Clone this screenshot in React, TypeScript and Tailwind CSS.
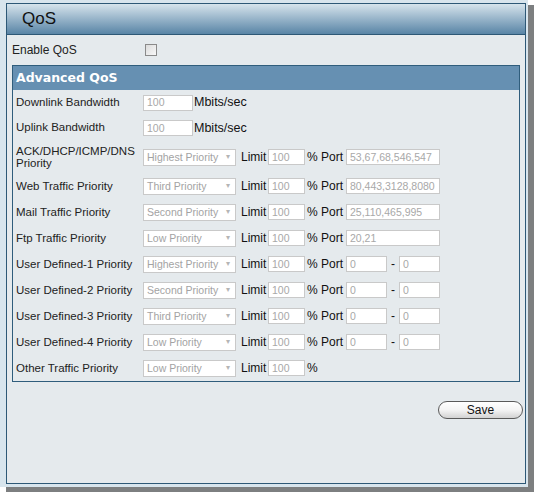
import React from 'react'

type Row = { label: string[]; sel: string; port?: string; range?: boolean; h?: string }

const rows: Row[] = [
  { label: ['ACK/DHCP/ICMP/DNS', 'Priority'], sel: 'Highest Priority', port: '53,67,68,546,547', h: 'h-[32px]' },
  { label: ['Web Traffic Priority'], sel: 'Third Priority', port: '80,443,3128,8080' },
  { label: ['Mail Traffic Priority'], sel: 'Second Priority', port: '25,110,465,995' },
  { label: ['Ftp Traffic Priority'], sel: 'Low Priority', port: '20,21' },
  { label: ['User Defined-1 Priority'], sel: 'Highest Priority', range: true },
  { label: ['User Defined-2 Priority'], sel: 'Second Priority', range: true },
  { label: ['User Defined-3 Priority'], sel: 'Third Priority', range: true },
  { label: ['User Defined-4 Priority'], sel: 'Low Priority', range: true },
  { label: ['Other Traffic Priority'], sel: 'Low Priority' },
]

function Box({ value, w }: { value: string; w: string }) {
  return (
    <div className={`${w} h-[16px] bg-white border border-[#c9c9c9] px-[3px] flex items-center text-[10.5px] text-[#a8a8a8] leading-none overflow-hidden whitespace-nowrap`}>
      {value}
    </div>
  )
}

function Select({ value }: { value: string }) {
  return (
    <div className="w-[93px] h-[17px] bg-white border border-[#c9c9c9] pl-[3px] pr-[5px] flex items-center justify-between text-[10.5px] text-[#a3a3a3] leading-none">
      <span>{value}</span>
      <span className="text-[8px] text-[#b5b5b5]">▾</span>
    </div>
  )
}

function PriorityRow({ row }: { row: Row }) {
  return (
    <div className={`flex items-center ${row.h ?? 'h-[26px]'}`}>
      <div className="w-[127px] text-[11.5px] leading-[12px] text-[#222]">
        {row.label.map((l) => (
          <div key={l}>{l}</div>
        ))}
      </div>
      <Select value={row.sel} />
      <span className="w-[32px] pl-[5px] text-[12px] text-[#111]">Limit</span>
      <Box value="100" w="w-[37px]" />
      {row.port !== undefined || row.range ? (
        <span className="w-[41px] pl-[2px] text-[12px] text-[#111]">% Port</span>
      ) : (
        <span className="pl-[2px] text-[12px] text-[#111]">%</span>
      )}
      {row.port !== undefined && <Box value={row.port} w="w-[94px]" />}
      {row.range && (
        <>
          <Box value="0" w="w-[41px]" />
          <span className="w-[12px] text-center text-[12px] text-[#111]">-</span>
          <Box value="0" w="w-[41px]" />
        </>
      )}
    </div>
  )
}

export default function App() {
  return (
    <div className="w-[534px] h-[492px] bg-white font-['Liberation_Sans',Arial,sans-serif]">
      <div className="w-[528px] h-[487px] bg-[#d8e5ed] pt-[3px] pl-[6px] shadow-[6px_5px_0_#7d7f80]">
        <div className="w-[520px] h-[481px] border border-[#2d5876] bg-[#e5eaed] flex flex-col">
          <div className="h-[31px] bg-gradient-to-b from-[#d6e4ec] to-[#5985a6] border-b border-[#2d5876] flex items-center pl-[15px]">
            <span className="text-[17px] text-[#111]">QoS</span>
          </div>
          <div className="px-[5px] flex flex-col">
            <div className="h-[30px] flex items-center">
              <span className="w-[133px] text-[12px] text-[#222]">Enable QoS</span>
              <div className="w-[12px] h-[12px] border border-[#8a8a8a] bg-gradient-to-br from-[#dcdcdc] to-[#f8f8f8]" />
            </div>
            <div className="w-[508px] border border-[#2f5d7c] flex flex-col">
              <div className="h-[24px] bg-[#6690b2] flex items-center pl-[3px]">
                <span className="font-['DejaVu_Sans',Verdana,sans-serif] font-bold text-[12.5px] text-white">Advanced QoS</span>
              </div>
              <div className="pl-[3px] flex flex-col">
                <div className="h-[25px] flex items-center">
                  <span className="w-[127px] text-[11.5px] text-[#222]">Downlink Bandwidth</span>
                  <Box value="100" w="w-[50px]" />
                  <span className="pl-[1px] text-[12.5px] text-[#111]">Mbits/sec</span>
                </div>
                <div className="h-[26px] flex items-center">
                  <span className="w-[127px] text-[11.5px] text-[#222]">Uplink Bandwidth</span>
                  <Box value="100" w="w-[50px]" />
                  <span className="pl-[1px] text-[12.5px] text-[#111]">Mbits/sec</span>
                </div>
                {rows.map((r) => (
                  <PriorityRow key={r.label.join(' ')} row={r} />
                ))}
              </div>
            </div>
            <div className="flex justify-end mt-[19px] -mr-[3px]">
              <button className="w-[85px] h-[18px] rounded-full border border-[#5a5a5a] bg-gradient-to-b from-white via-[#f4f4f4] to-[#d2d2d2] text-[12px] text-[#111] leading-none">
                Save
              </button>
            </div>
          </div>
        </div>
      </div>
    </div>
  )
}
